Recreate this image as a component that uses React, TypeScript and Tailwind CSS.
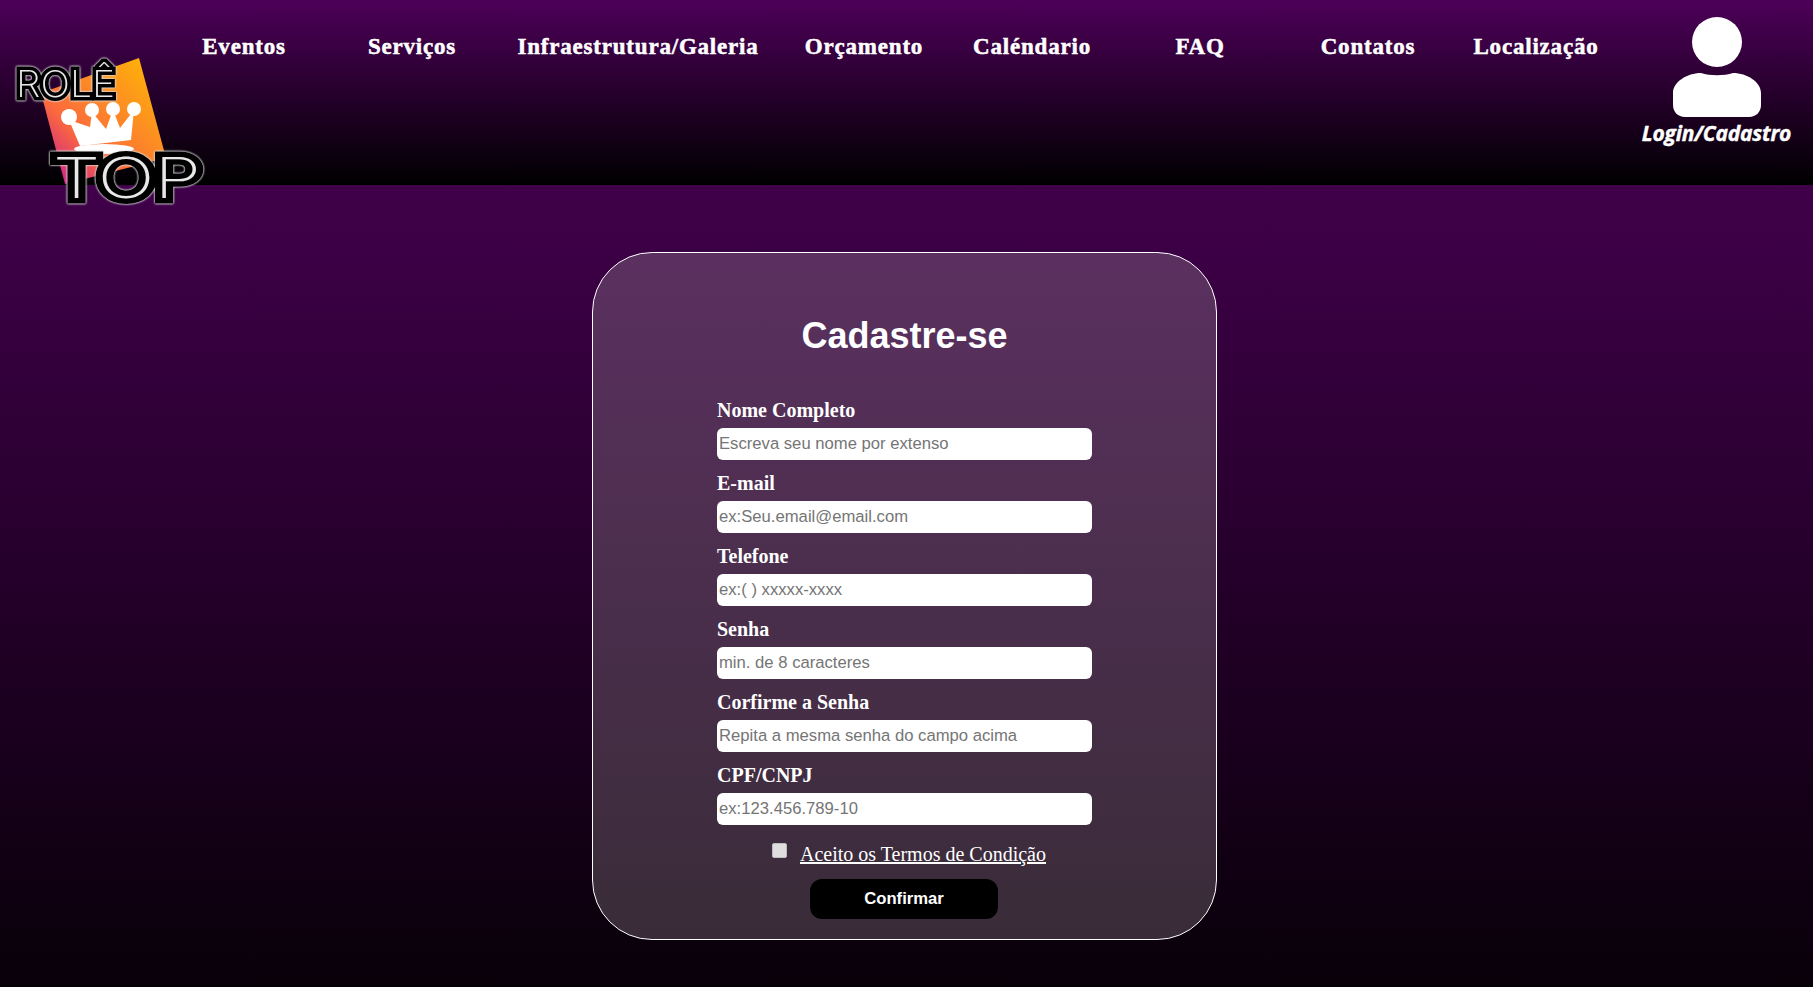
import React from "react";

const navItems = [
  { label: "Eventos", width: "w-[168px]" },
  { label: "Serviços", width: "w-[168px]" },
  { label: "Infraestrutura/Galeria", width: "w-[284px]" },
  { label: "Orçamento", width: "w-[168px]" },
  { label: "Caléndario", width: "w-[168px]" },
  { label: "FAQ", width: "w-[168px]" },
  { label: "Contatos", width: "w-[168px]" },
  { label: "Localização", width: "w-[168px]" },
];

const fields = [
  { label: "Nome Completo", placeholder: "Escreva seu nome por extenso" },
  { label: "E-mail", placeholder: "ex:Seu.email@email.com" },
  { label: "Telefone", placeholder: "ex:( ) xxxxx-xxxx" },
  { label: "Senha", placeholder: "min. de 8 caracteres" },
  { label: "Corfirme a Senha", placeholder: "Repita a mesma senha do campo acima" },
  { label: "CPF/CNPJ", placeholder: "ex:123.456.789-10" },
];

const Logo = () => (
  <svg className="absolute left-0 top-0" width="220" height="215" viewBox="0 0 220 215">
    <defs>
      <linearGradient id="logoFill" x1="0" y1="1" x2="1" y2="0">
        <stop offset="0" stopColor="#c20aa5" />
        <stop offset="0.35" stopColor="#fb6a3c" />
        <stop offset="1" stopColor="#ffbe00" />
      </linearGradient>
    </defs>
    <polygon points="139,58 166,158 65,184 41,93" fill="url(#logoFill)" />
    <g fill="#fff">
      <circle cx="69" cy="117" r="8" />
      <circle cx="92" cy="110" r="7" />
      <circle cx="113" cy="109" r="7" />
      <circle cx="134" cy="109" r="7" />
      <polygon points="80,146 69,120 90,127 92,112 106,129 113,110 120,128 134,110 131,140" />
      <ellipse cx="104" cy="149" rx="30" ry="5" />
    </g>
    <g
      className="[filter:drop-shadow(0_0_1px_#e0e0e0)_drop-shadow(0_0_0.5px_#e0e0e0)]"
      fontFamily="Inter, 'DejaVu Sans', sans-serif"
      fontWeight="200"
      fill="#e8e8e8"
      stroke="#000"
      paintOrder="stroke"
    >
      <text x="16" y="97" fontSize="37" strokeWidth="7" textLength="99" lengthAdjust="spacingAndGlyphs">
        ROLÊ
      </text>
      <text x="53" y="198" fontSize="56" strokeWidth="11" textLength="148" lengthAdjust="spacingAndGlyphs">
        TOP
      </text>
    </g>
  </svg>
);

const UserIcon = () => (
  <svg width="90" height="101" viewBox="0 0 90 101" fill="#fff">
    <circle cx="45" cy="25" r="25" />
    <path d="M1 88V76C1 65 15 56 29 56C38 59 52 59 61 56C75 56 89 65 89 76V88C89 95 84 100 77 100H13C6 100 1 95 1 88Z" />
  </svg>
);

export default function App() {
  return (
    <div className="relative h-[987px] overflow-hidden bg-black">
      <header className="flex h-[185px] bg-linear-to-b/srgb from-[#4c0058] to-black pl-[160px]">
        <nav className="flex items-start pt-[33px]">
          {navItems.map((item) => (
            <a
              key={item.label}
              href="#"
              className={`${item.width} text-center font-['Liberation_Serif',serif] text-[23px] leading-[28px] font-bold tracking-[0.8px] whitespace-nowrap text-white [-webkit-text-stroke:0.5px_#fff]`}
            >
              {item.label}
            </a>
          ))}
        </nav>
        <a href="#" className="flex w-[193px] flex-col items-center pt-[17px] text-white">
          <UserIcon />
          <span className="mt-[3px] font-['Open_Sans',sans-serif] text-[21px] leading-[24px] font-bold tracking-[-0.2px] whitespace-nowrap italic [-webkit-text-stroke:0.4px_#fff]">
            Login/Cadastro
          </span>
        </a>
      </header>
      <Logo />
      <main className="flex h-[802px] justify-center bg-linear-to-b/srgb from-[#40004a] to-[#080009] pt-[67px] pr-[4px]">
        <section className="flex h-[688px] w-[625px] flex-col items-center rounded-[60px] border border-white bg-linear-to-b/srgb from-[#5b3060] to-[#392c38] pt-[60px]">
          <h1 className="font-['Liberation_Sans',sans-serif] text-[36px] leading-[46px] font-bold text-white">
            Cadastre-se
          </h1>
          <form className="mt-[40px] flex w-[375px] flex-col">
            <div className="flex flex-col gap-[12px]">
              {fields.map((field) => (
                <label key={field.label} className="flex flex-col">
                  <span className="mb-[6px] h-[23px] font-['Liberation_Serif',serif] text-[20px] leading-[23px] font-bold text-white">
                    {field.label}
                  </span>
                  <input
                    type="text"
                    placeholder={field.placeholder}
                    className="h-[32px] w-full rounded-[6px] bg-white px-[2px] font-['Liberation_Sans',sans-serif] text-[16.67px] text-black placeholder:text-[#757575]"
                  />
                </label>
              ))}
            </div>
            <div className="mt-[17px] flex h-[24px] items-start justify-center gap-[13px] pl-[9px]">
              <input
                type="checkbox"
                className="mt-px h-[15px] w-[15px] appearance-none rounded-[2px] border border-[#bdbdbd] bg-[#dedede]"
              />
              <a
                href="#"
                className="font-['Liberation_Serif',serif] text-[20px] leading-[24px] text-white underline"
              >
                Aceito os Termos de Condição
              </a>
            </div>
            <button
              type="button"
              className="mt-[13px] ml-[93px] h-[40px] w-[188px] rounded-[12px] bg-black pb-[2px] font-['Liberation_Sans',sans-serif] text-[16.67px] font-bold text-white"
            >
              Confirmar
            </button>
          </form>
        </section>
      </main>
    </div>
  );
}
